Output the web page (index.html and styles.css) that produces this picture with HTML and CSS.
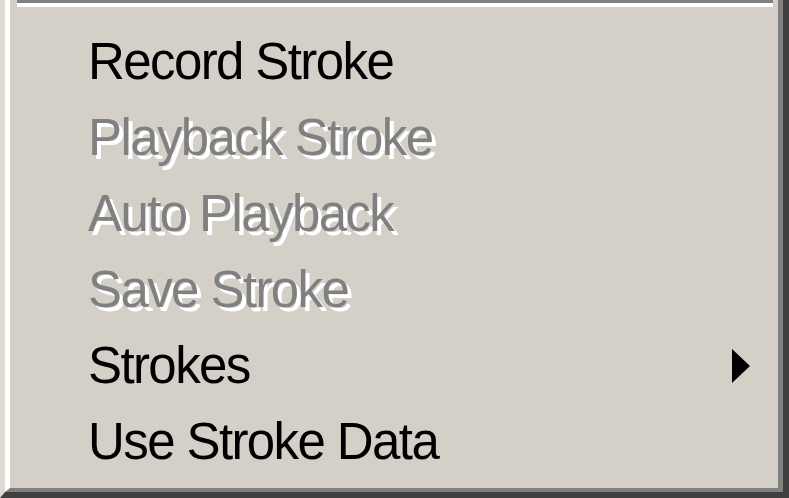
FILE: index.html
```html
<!DOCTYPE html>
<html lang="en">
<head>
    <meta charset="UTF-8">
    <title>Stroke Menu</title>
    <link rel="stylesheet" href="styles.css">
</head>
<body>
    <div class="menu">
        <div class="menu-inner">
            <div class="separator"></div>
            <ul class="items">
                <li class="item">Record Stroke</li>
                <li class="item disabled">Playback Stroke</li>
                <li class="item disabled">Auto Playback</li>
                <li class="item disabled">Save Stroke</li>
                <li class="item">Strokes <span class="arrow"></span></li>
                <li class="item">Use Stroke Data</li>
            </ul>
        </div>
    </div>
</body>
</html>
```

FILE: styles.css
```css
body {
    margin: 0;
    background-color: #d4d0c8;
    font-family: "Liberation Sans", Arial, sans-serif;
}
.menu {
    width: 789px;
    height: 498px;
    box-sizing: border-box;
    background-color: #d4d0c8;
    border-left: 5px solid #dedbd5;
    border-right: 6px solid #404040;
    border-bottom: 6px solid #404040;
}
.menu-inner {
    height: 100%;
    box-sizing: border-box;
    border-left: 5px solid #ffffff;
    border-right: 5px solid #808080;
    border-bottom: 4px solid #808080;
}
.separator {
    margin: 0 5px 0 7px;
    border-top: 3px solid #808080;
    border-bottom: 4px solid #ffffff;
}
.items {
    list-style: none;
    margin: 0;
    padding: 17px 0 0 0;
}
.item {
    display: flex;
    align-items: center;
    height: 76px;
    line-height: 76px;
    padding-left: 78px;
    padding-right: 28px;
    font-size: 51px;
    letter-spacing: -1.6px;
    color: #000000;
    white-space: nowrap;
}
.item.disabled {
    color: #808080;
    text-shadow: 4px 4px 0 #ffffff;
}
.arrow {
    margin-left: auto;
    width: 0;
    height: 0;
    border-left: 18px solid #000000;
    border-top: 17px solid transparent;
    border-bottom: 17px solid transparent;
}
```
